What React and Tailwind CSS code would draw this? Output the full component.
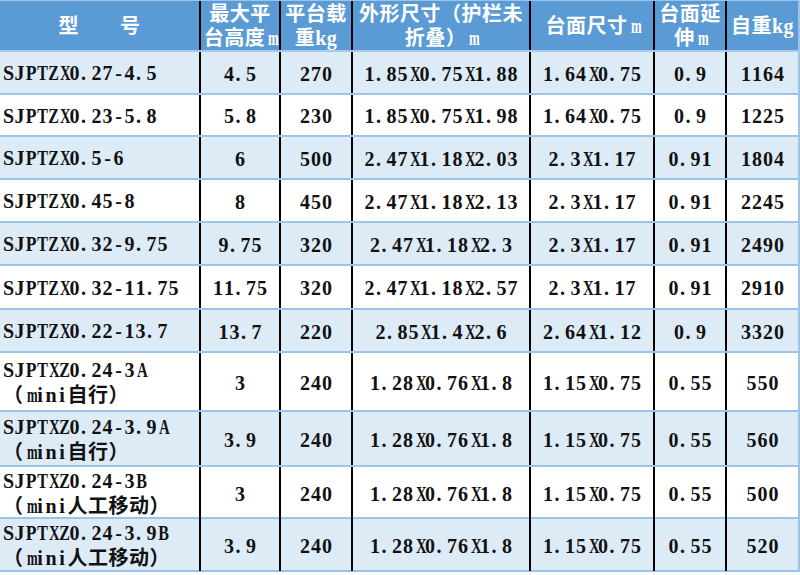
const cols = "grid grid-cols-[201px_80px_72px_178px_124px_72px_73px]";

const head = [
  ["型\u3000\u3000号"],
  ["最大平", "台高度m"],
  ["平台载", "重kg"],
  ["外形尺寸（护栏未", "折叠）m"],
  ["台面尺寸m"],
  ["台面延", "伸m"],
  ["自重kg"],
];

const rows = [
  { h: "h-[43px]", model: ["SJPTZX0.27-4.5"], v: ["4.5", "270", "1.85X0.75X1.88", "1.64X0.75", "0.9", "1164"] },
  { h: "h-[42px]", model: ["SJPTZX0.23-5.8"], v: ["5.8", "230", "1.85X0.75X1.98", "1.64X0.75", "0.9", "1225"] },
  { h: "h-[43px]", model: ["SJPTZX0.5-6"], v: ["6", "500", "2.47X1.18X2.03", "2.3X1.17", "0.91", "1804"] },
  { h: "h-[43px]", model: ["SJPTZX0.45-8"], v: ["8", "450", "2.47X1.18X2.13", "2.3X1.17", "0.91", "2245"] },
  { h: "h-[43px]", model: ["SJPTZX0.32-9.75"], v: ["9.75", "320", "2.47X1.18X2.3", "2.3X1.17", "0.91", "2490"] },
  { h: "h-[44px]", model: ["SJPTZX0.32-11.75"], v: ["11.75", "320", "2.47X1.18X2.57", "2.3X1.17", "0.91", "2910"] },
  { h: "h-[43px]", model: ["SJPTZX0.22-13.7"], v: ["13.7", "220", "2.85X1.4X2.6", "2.64X1.12", "0.9", "3320"] },
  { h: "h-[59px]", model: ["SJPTXZ0.24-3A", "（mini自行）"], v: ["3", "240", "1.28X0.76X1.8", "1.15X0.75", "0.55", "550"] },
  { h: "h-[55px]", model: ["SJPTXZ0.24-3.9A", "（mini自行）"], v: ["3.9", "240", "1.28X0.76X1.8", "1.15X0.75", "0.55", "560"] },
  { h: "h-[52px]", model: ["SJPTXZ0.24-3B", "（mini人工移动）"], v: ["3", "240", "1.28X0.76X1.8", "1.15X0.75", "0.55", "500"] },
  { h: "h-[53px]", model: ["SJPTXZ0.24-3.9B", "（mini人工移动）"], v: ["3.9", "240", "1.28X0.76X1.8", "1.15X0.75", "0.55", "520"] },
];

// wide latin letters get squeezed to fit the half-width cell
const squeeze = {
  P: "scale-x-[0.88]",
  T: "scale-x-[0.8]",
  Z: "scale-x-[0.8]",
  B: "scale-x-[0.8]",
  X: "scale-x-[0.74]",
  A: "scale-x-[0.74]",
  m: "scale-x-[0.64]",
};

// half-width cells like SimSun: every ASCII char takes the same width
function Mono({ s }) {
  return [...s].map((c, k) =>
    c.charCodeAt(0) < 128 ? (
      <span
        key={k}
        className={`inline-block w-[11px] tracking-normal ${c === "." ? "text-left pl-[1px]" : "text-center"}`}
      >
        <span className={`inline-block ${squeeze[c] || ""}`}>{c}</span>
      </span>
    ) : (
      <span key={k}>{c}</span>
    )
  );
}

export default function App() {
  return (
    <div className="w-[800px] h-[575px] overflow-hidden bg-white font-['Liberation_Serif','Noto_Sans_CJK_SC',serif] text-[20px] tracking-[0.5px] font-bold">
      {/* header */}
      <div className={`${cols} h-[52px] bg-[#5b9bd5] text-white border-t border-[#9dc3e6] border-b-2 border-b-[#a9cbe9]`}>
        {head.map((lines, i) => (
          <div
            key={i}
            className={`flex flex-col items-center justify-center leading-[24px] ${i === 6 ? "border-r-2 border-[#9dc3e6]" : "border-r-2 border-black"}`}
          >
            {lines.map((l) => (
              <span key={l} className="whitespace-nowrap">
                <Mono s={l} />
              </span>
            ))}
          </div>
        ))}
      </div>

      {/* body */}
      {rows.map((r, i) => (
        <div
          key={i}
          className={`${cols} ${r.h} border-b-2 border-[#9dc3e6] text-[#111] ${i % 2 === 0 ? "bg-[#ddebf7]" : "bg-white"}`}
        >
          <div className="flex flex-col justify-center pl-[3px] pt-[2px] leading-[25px] border-r-2 border-black">
            {r.model.map((l) => (
              <span key={l} className="whitespace-nowrap">
                <Mono s={l} />
              </span>
            ))}
          </div>
          {r.v.map((v, j) => (
            <div
              key={j}
              className={`flex items-center justify-center pt-[2px] whitespace-nowrap ${j === 5 ? "border-r-2 border-[#9dc3e6]" : "border-r-2 border-black"}`}
            >
              <Mono s={v} />
            </div>
          ))}
        </div>
      ))}
    </div>
  );
}
